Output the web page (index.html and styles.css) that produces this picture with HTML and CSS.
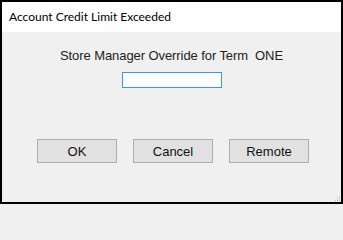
FILE: index.html
```html
<!DOCTYPE html>
<html>
<head>
<meta charset="utf-8">
<link rel="stylesheet" href="styles.css">
</head>
<body>
<div class="window">
  <div class="titlebar">Account Credit Limit Exceeded</div>
  <div class="content">
    <div class="label">Store Manager Override for Term&nbsp; ONE</div>
    <div class="input"></div>
    <div class="buttons">
      <div class="btn">OK</div>
      <div class="btn">Cancel</div>
      <div class="btn">Remote</div>
    </div>
    <svg class="grip" width="6" height="6" viewBox="0 0 6 6">
      <rect x="4" y="0" width="1" height="1" fill="#b8b8b8"/>
      <rect x="2" y="2" width="1" height="1" fill="#b8b8b8"/>
      <rect x="4" y="2" width="1" height="1" fill="#b8b8b8"/>
      <rect x="0" y="4" width="1" height="1" fill="#b8b8b8"/>
      <rect x="2" y="4" width="1" height="1" fill="#b8b8b8"/>
      <rect x="4" y="4" width="1" height="1" fill="#b8b8b8"/>
    </svg>
  </div>
</div>
</body>
</html>
```
FILE: styles.css
```css
html, body {
  margin: 0;
  padding: 0;
  background: #f0f0f0;
}
.window {
  width: 343px;
  height: 204px;
  box-sizing: border-box;
  border: 2px solid #000;
  display: flex;
  flex-direction: column;
  background: #f0f0f0;
}
.titlebar {
  height: 30px;
  background: #fff;
  font-family: Lato, "Noto Sans", sans-serif;
  font-size: 12px;
  color: #000;
  padding-left: 7px;
  line-height: 29px;
  white-space: nowrap;
}
.content {
  position: relative;
  flex: 1;
  display: flex;
  flex-direction: column;
  align-items: center;
  font-family: "Liberation Sans", Arial, sans-serif;
  font-size: 13px;
  color: #222;
}
.label {
  margin-top: 16px;
  line-height: 15px;
  white-space: nowrap;
  letter-spacing: -0.08px;
}
.input {
  margin-top: 9px;
  width: 100px;
  height: 16px;
  box-sizing: border-box;
  border: 1px solid #3c96e6;
  background: #fff;
}
.buttons {
  margin-top: 51px;
  display: flex;
  gap: 16px;
  align-self: flex-start;
  padding-left: 35px;
}
.btn {
  width: 80px;
  height: 24px;
  box-sizing: border-box;
  border: 1px solid #adadad;
  background: #e1e1e1;
  display: flex;
  align-items: center;
  justify-content: center;
  font-size: 13px;
  color: #111;
}
.grip {
  position: absolute;
  right: 0;
  bottom: 0;
}
```
